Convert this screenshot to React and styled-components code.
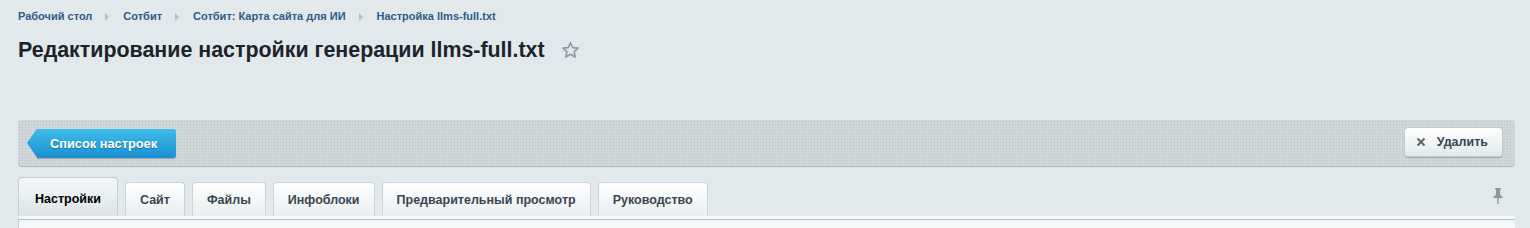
import React from 'react';
import styled, { createGlobalStyle } from 'styled-components';

const GlobalStyle = createGlobalStyle`
  html, body {
    margin: 0;
    padding: 0;
    background-color: #e2e9ec;
    font-family: "Liberation Sans", Arial, sans-serif;
  }
`;

const crumbs = ['Рабочий стол', 'Сотбит', 'Сотбит: Карта сайта для ИИ', 'Настройка llms-full.txt'];
const tabs = ['Настройки', 'Сайт', 'Файлы', 'Инфоблоки', 'Предварительный просмотр', 'Руководство'];

const App = () => {
  return (
    <>
      <GlobalStyle />
      <Page>
        <Breadcrumbs>
          {crumbs.map((c, i) => (
            <React.Fragment key={c}>
              {i > 0 && <CrumbArrow />}
              <Crumb href="#">{c}</Crumb>
            </React.Fragment>
          ))}
        </Breadcrumbs>

        <TitleRow>
          <Title>Редактирование настройки генерации llms-full.txt</Title>
          <StarIcon viewBox="0 0 20 20">
            <path
              d="M10 1.8l2.35 5.2 5.65.55-4.25 3.8 1.25 5.55L10 14l-5 2.9 1.25-5.55L2 7.55l5.65-.55z"
              fill="none"
              stroke="#8d9aa5"
              strokeWidth="1.7"
              strokeLinejoin="round"
            />
          </StarIcon>
        </TitleRow>

        <Toolbar>
          <BackButton href="#">Список настроек</BackButton>
          <DeleteButton>
            <CloseIcon viewBox="0 0 10 10">
              <path d="M1.5 1.5l7 7M8.5 1.5l-7 7" stroke="#5d676e" strokeWidth="2" />
            </CloseIcon>
            Удалить
          </DeleteButton>
        </Toolbar>

        <TabRow>
          {tabs.map((t, i) => (
            <Tab key={t} active={i === 0}>{t}</Tab>
          ))}
          <PinIcon viewBox="0 0 12 18">
            <path d="M3 1h6v1.5H8v5l2.5 2.5v1H1.5v-1L4 7.5v-5H3z" fill="#8c969b" />
            <rect x="5.3" y="11" width="1.4" height="6" fill="#8c969b" />
          </PinIcon>
        </TabRow>

        <Panel />
      </Page>
    </>
  );
};

const Page = styled.div`
  padding: 10px 15px 0 18px;
`;

const Breadcrumbs = styled.div`
  display: flex;
  align-items: center;
  height: 13px;
`;

const Crumb = styled.a`
  font-size: 11px;
  line-height: 13px;
  font-weight: bold;
  color: #2f5b88;
  text-decoration: none;
  white-space: nowrap;
`;

const CrumbArrow = styled.span`
  width: 0;
  height: 0;
  margin: 0 14px 0 13px;
  border-top: 4px solid transparent;
  border-bottom: 4px solid transparent;
  border-left: 4px solid #b3bec4;
`;

const TitleRow = styled.div`
  display: flex;
  align-items: center;
  margin-top: 14px;
`;

const Title = styled.h1`
  margin: 0;
  font-size: 21.4px;
  line-height: 26px;
  font-weight: bold;
  color: #1c232a;
  white-space: nowrap;
`;

const StarIcon = styled.svg`
  width: 19px;
  height: 19px;
  margin-left: 16px;
  margin-top: 1px;
`;

const Toolbar = styled.div`
  display: flex;
  align-items: center;
  justify-content: space-between;
  height: 46px;
  margin-top: 57px;
  padding: 0 12px 0 9px;
  border-radius: 4px;
  background-color: #cfd7da;
  background-image: radial-gradient(circle, #b7c1c6 0.7px, transparent 1px);
  background-size: 3px 3px;
  box-shadow: 0 1px 0 #aab5ba;
`;

const BackButton = styled.a`
  position: relative;
  display: flex;
  align-items: center;
  height: 29px;
  margin-left: 10px;
  padding: 0 19px 0 13px;
  border-radius: 0 3px 3px 0;
  background: linear-gradient(#3ebdea, #1b8fd2);
  box-shadow: 0 1px 1px rgba(0, 0, 0, 0.25);
  color: #fff;
  font-size: 12.8px;
  font-weight: bold;
  text-decoration: none;
  text-shadow: 0 1px 1px rgba(0, 0, 0, 0.3);

  &::before {
    content: '';
    position: absolute;
    left: -10px;
    top: 0;
    width: 10px;
    height: 29px;
    background: linear-gradient(#3ebdea, #1b8fd2);
    clip-path: polygon(100% 0, 0 50%, 100% 100%);
  }
`;

const DeleteButton = styled.button`
  display: flex;
  align-items: center;
  gap: 11px;
  height: 30px;
  padding: 0 14px 0 11px;
  margin-top: -2px;
  border: 1px solid #c2cbcf;
  border-radius: 4px;
  background: linear-gradient(#ffffff, #e2e9eb);
  box-shadow: 0 1px 1px rgba(0, 0, 0, 0.2);
  color: #3a4650;
  font-family: "Liberation Sans", Arial, sans-serif;
  font-size: 12.5px;
  font-weight: bold;
  cursor: pointer;
`;

const CloseIcon = styled.svg`
  width: 10px;
  height: 10px;
`;

const TabRow = styled.div`
  display: flex;
  align-items: flex-end;
  gap: 7px;
  height: 39px;
  margin-top: 11px;
`;

const Tab = styled.div`
  display: flex;
  align-items: center;
  box-sizing: border-box;
  height: ${({ active }) => (active ? '39px' : '34px')};
  padding: ${({ active }) => (active ? '4px 16px 0' : '0 14px')};
  border: 1px solid ${({ active }) => (active ? '#c6d0d4' : '#cbd4d8')};
  border-bottom: none;
  border-radius: 4px 4px 0 0;
  background: ${({ active }) =>
    active ? 'linear-gradient(#f4f7f8, #dde5e8)' : 'linear-gradient(#ffffff, #e8eef0)'};
  color: ${({ active }) => (active ? '#000' : '#3a4650')};
  font-size: 12.5px;
  font-weight: bold;
  white-space: nowrap;
`;

const PinIcon = styled.svg`
  width: 12px;
  height: 18px;
  margin: 0 11px 11px auto;
`;

const Panel = styled.div`
  height: 20px;
  border-left: 1px solid #c6d0d4;
  border-top: 3px solid #f7f9fa;
  box-shadow: inset 0 1px 0 #b3bec3;
  background: #f5f8f9;
`;

export default App;
